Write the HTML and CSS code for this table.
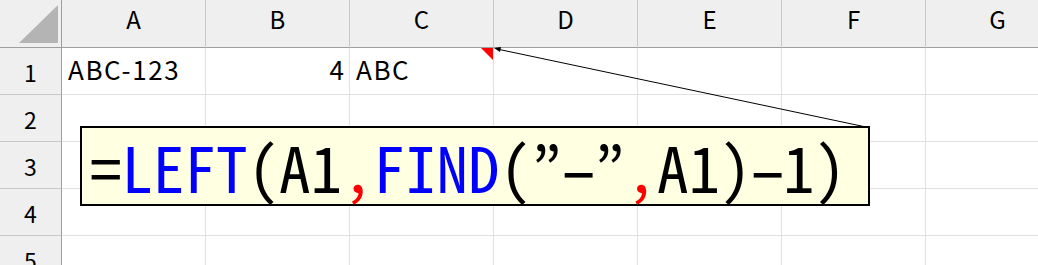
FILE: index.html
```html
<!DOCTYPE html>
<html lang="ja">
<head>
<meta charset="utf-8">
<link rel="stylesheet" href="styles.css">
</head>
<body>
<div class="sheet">
  <div class="grid">
    <div class="corner"><svg class="corner-tri" width="62" height="48" viewBox="0 0 62 48"><polygon points="19,43 58,43 58,5" fill="#b4b4b4"/></svg></div>
    <div class="colhead">A</div>
    <div class="colhead">B</div>
    <div class="colhead">C</div>
    <div class="colhead">D</div>
    <div class="colhead">E</div>
    <div class="colhead">F</div>
    <div class="colhead">G</div>

    <div class="rowhead">1</div>
    <div class="cell">ABC-123</div>
    <div class="cell num">4</div>
    <div class="cell has-note">ABC<span class="note-mark"></span></div>
    <div class="cell"></div>
    <div class="cell"></div>
    <div class="cell"></div>
    <div class="cell"></div>

    <div class="rowhead">2</div>
    <div class="cell"></div><div class="cell"></div><div class="cell"></div><div class="cell"></div><div class="cell"></div><div class="cell"></div><div class="cell"></div>

    <div class="rowhead">3</div>
    <div class="cell"></div><div class="cell"></div><div class="cell"></div><div class="cell"></div><div class="cell"></div><div class="cell"></div><div class="cell"></div>

    <div class="rowhead">4</div>
    <div class="cell"></div><div class="cell"></div><div class="cell"></div><div class="cell"></div><div class="cell"></div><div class="cell"></div><div class="cell"></div>

    <div class="rowhead">5</div>
    <div class="cell"></div><div class="cell"></div><div class="cell"></div><div class="cell"></div><div class="cell"></div><div class="cell"></div><div class="cell"></div>
  </div>

  <svg class="connector" width="1038" height="265" viewBox="0 0 1038 265">
    <line x1="866" y1="127" x2="497" y2="49" stroke="#000" stroke-width="1"/>
    <polygon points="494,48 501,47 500,52" fill="#000"/>
  </svg>

  <div class="comment"><span class="op">=</span><span class="fn">LEFT</span><span class="op">(A1</span><span class="sep">,</span><span class="fn">FIND</span><span class="op">(<span class="q">”</span><span class="dash">-</span><span class="q">”</span></span><span class="sep">,</span><span class="op">A1)<span class="dash">-</span>1)</span></div>
</div>
</body>
</html>
```

FILE: styles.css
```css
html, body {
  margin: 0;
  padding: 0;
  background: #ffffff;
  overflow: hidden;
}

.sheet {
  position: relative;
  width: 1038px;
  height: 265px;
  overflow: hidden;
  font-family: "Noto Sans CJK JP", "Noto Sans", sans-serif;
  color: #000;
}

.grid {
  display: grid;
  grid-template-columns: 62px repeat(7, 144px);
  grid-template-rows: 48px repeat(5, 47px);
}

.corner {
  background: #efefef;
  border-right: 1px solid #9e9e9e;
  border-bottom: 1px solid #9e9e9e;
  box-sizing: border-box;
  position: relative;
}

.corner-tri {
  position: absolute;
  left: 0;
  top: 0;
}

.colhead {
  background: #efefef;
  border-right: 1px solid #c8c8c8;
  border-bottom: 1px solid #9e9e9e;
  box-sizing: border-box;
  font-size: 24px;
  line-height: 1;
  display: flex;
  justify-content: center;
  padding-top: 7px;
}

.rowhead {
  background: #efefef;
  border-right: 1px solid #9e9e9e;
  border-bottom: 1px solid #c8c8c8;
  box-sizing: border-box;
  font-size: 23px;
  line-height: 1;
  display: flex;
  justify-content: center;
  align-items: flex-end;
  padding-bottom: 10px;
}

.cell {
  border-right: 1px solid #e1e1e1;
  border-bottom: 1px solid #e1e1e1;
  box-sizing: border-box;
  font-size: 26px;
  line-height: 1;
  display: flex;
  align-items: flex-end;
  padding: 0 5px 12px 6px;
  letter-spacing: 1.6px;
}

.cell.num {
  justify-content: flex-end;
  letter-spacing: 0;
}

.cell.has-note {
  position: relative;
}

.note-mark {
  position: absolute;
  right: 0;
  top: 0;
  width: 0;
  height: 0;
  border-top: 12px solid #ff0000;
  border-left: 12px solid transparent;
}

.connector {
  position: absolute;
  left: 0;
  top: 0;
  pointer-events: none;
}

.comment {
  position: absolute;
  left: 80px;
  top: 126px;
  width: 790px;
  height: 80px;
  box-sizing: border-box;
  border: 2px solid #000;
  background: #ffffe1;
  font-family: "Noto Sans Mono CJK JP", "DejaVu Sans Mono", monospace;
  font-size: 63px;
  line-height: 76px;
  padding-left: 8px;
  white-space: nowrap;
}

.fn { color: #0000ff; }
.sep { color: #ff0000; }
.op { color: #000; }
.q {
  display: inline-block;
  width: 0.5em;
  text-align: center;
}
.dash {
  display: inline-block;
  transform: scaleX(1.55);
}
```
